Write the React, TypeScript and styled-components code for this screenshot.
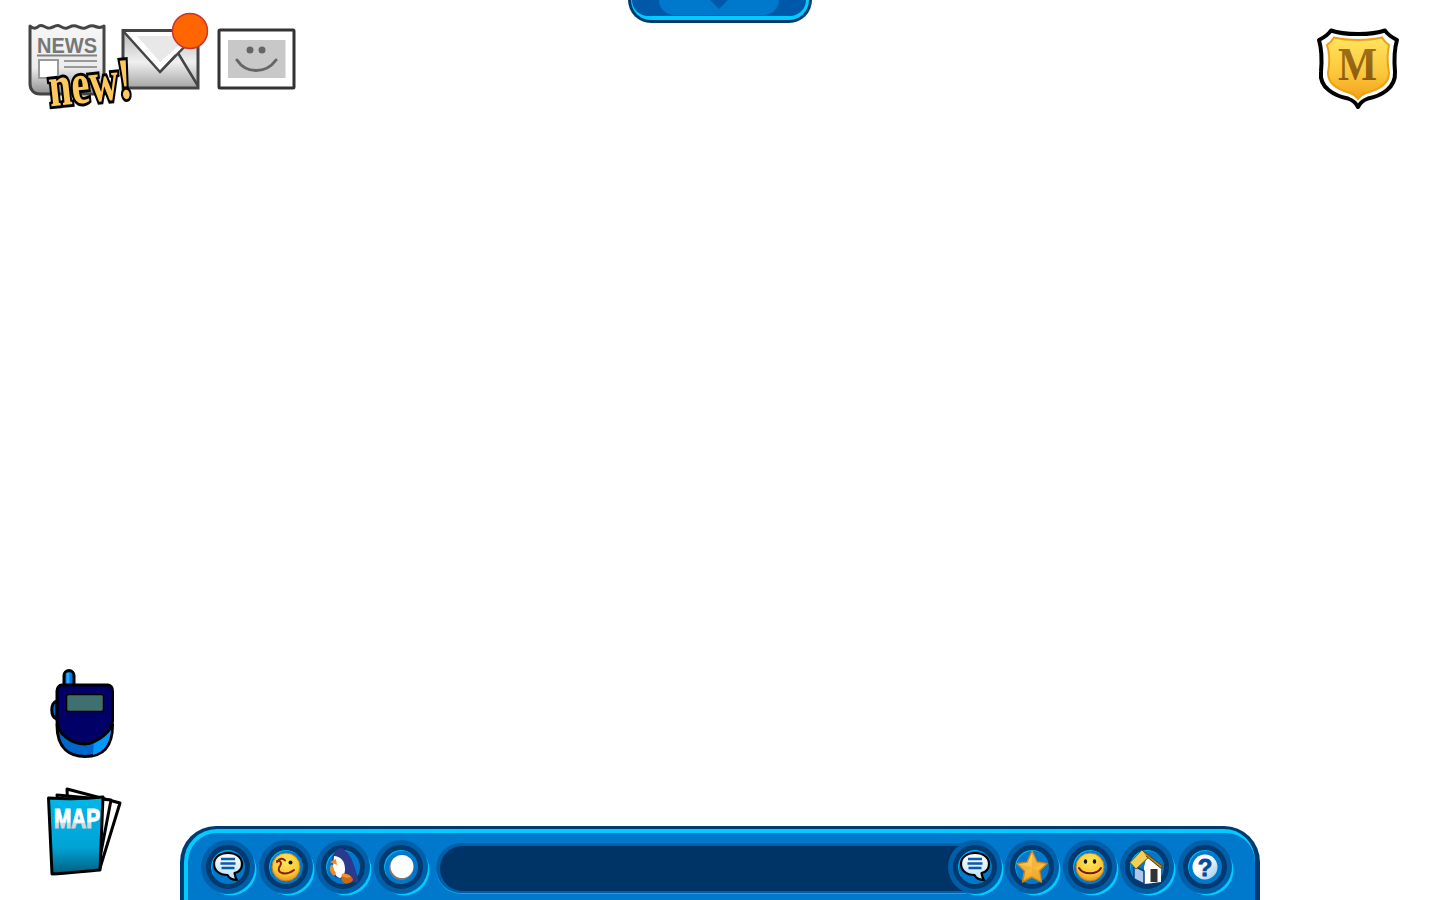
import React from "react";
import styled, { createGlobalStyle } from "styled-components";

const Global = createGlobalStyle`
  html, body { margin: 0; padding: 0; background: #fff; font-family: "Liberation Sans", Arial, sans-serif; }
`;

const Stage = styled.main`
  width: 1440px;
  height: 900px;
  overflow: hidden;
  background: #fff;
  display: flex;
  flex-direction: column;
  justify-content: space-between;
`;

const TopRow = styled.header`
  display: grid;
  grid-template-columns: 1fr auto 1fr;
  align-items: start;
`;

const TopLeft = styled.nav`
  display: flex;
  align-items: flex-start;
  padding-left: 26px;
`;

const TopRight = styled.div`
  display: flex;
  justify-content: flex-end;
  padding: 27px 40px 0 0;
`;

const IconSlot = styled.div<{ $top: number; $left?: number; $front?: boolean }>`
  position: relative;
  z-index: ${(p) => (p.$front ? 2 : 1)};
  display: flex;
  margin-top: ${(p) => p.$top}px;
  margin-left: ${(p) => p.$left ?? 0}px;
`;

const NewTag = styled.span`
  position: absolute;
  left: 14px;
  top: 33px;
  width: 100px;
  font: 700 58px/56px "Liberation Serif", serif;
  color: #ffc85c;
  -webkit-text-stroke: 6px #000;
  paint-order: stroke fill;
  transform: rotate(-6deg) scaleX(0.7);
  white-space: nowrap;
  display: flex;
  justify-content: center;
`;

const Tab = styled.div`
  width: 184px;
  height: 23px;
  box-sizing: border-box;
  background: #003a70;
  border-radius: 0 0 36px 36px;
  padding: 0 3px 3px;
`;

const TabRim = styled.div`
  height: 100%;
  box-sizing: border-box;
  background: #00ccff;
  border-radius: 0 0 33px 33px;
  padding: 0 3px 4px 1px;
`;

const TabFace = styled.div`
  height: 100%;
  background: #0059a8;
  border-radius: 0 0 28px 28px;
  display: flex;
  justify-content: center;
`;

const TabDome = styled.div`
  width: 120px;
  height: 15px;
  background: #0078cc;
  border-radius: 0 0 20px 20px;
  display: flex;
  justify-content: center;
`;

const TabChevron = styled.div`
  width: 0;
  height: 0;
  border-left: 9px solid transparent;
  border-right: 9px solid transparent;
  border-top: 9px solid #0059a8;
`;

const BottomRow = styled.footer`
  display: grid;
  grid-template-columns: 180px 1080px;
  align-items: end;
`;

const SideTools = styled.div`
  display: flex;
  flex-direction: column;
  align-items: flex-start;
  gap: 26px;
  padding: 0 0 22px 46px;
`;

const Toolbar = styled.div`
  height: 74px;
  box-sizing: border-box;
  background: #003a70;
  border-radius: 36px 36px 0 0;
  padding: 3px 5px 0 4px;
`;

const ToolbarRim = styled.div`
  height: 100%;
  box-sizing: border-box;
  background: #00ccff;
  border-radius: 33px 31px 0 0;
  padding: 4px 0 0 4px;
`;

const ToolbarFace = styled.div`
  height: 100%;
  box-sizing: border-box;
  background: #0078cc;
  border-radius: 29px 29px 0 0;
  display: flex;
  align-items: flex-start;
  gap: 7.6px;
  padding: 9px 25px 0 15px;
`;

const RoundButton = styled.button`
  flex: none;
  position: relative;
  z-index: 1;
  width: 50px;
  height: 50px;
  padding: 0;
  border: 0;
  border-radius: 50%;
  background: #005fa8;
  box-shadow: 0 0 0 2px #005fa8, 3px 3px 0 0.5px #00ccff;
  display: flex;
  align-items: center;
  justify-content: center;
`;

const ButtonRing = styled.span`
  width: 44px;
  height: 44px;
  flex: none;
  box-sizing: border-box;
  border: 5px solid #003a70;
  border-radius: 50%;
  background: #0078cc;
  box-shadow: inset 1px 1px 0 #00b4f0;
  display: flex;
  align-items: center;
  justify-content: center;
`;

const ButtonIcon = styled.svg`
  flex: none;
  width: 40px;
  height: 40px;
  overflow: visible;
`;

const ChatField = styled.div`
  flex: 1;
  height: 50px;
  box-sizing: border-box;
  margin: 1px -24px 0 3px;
  background: #005fa8;
  border-radius: 25px 0 0 25px;
  padding: 3px 0 2px 4px;
  box-shadow: 0 1px 0 #00aee8;
`;

const ChatInput = styled.div`
  height: 100%;
  background: #003366;
  border-radius: 24px 0 0 24px;
`;

const Ico = styled.svg`
  display: block;
  flex: none;
`;

const HiddenDefs = styled.svg`
  position: absolute;
  width: 0;
  height: 0;
`;

const Defs = () => (
  <HiddenDefs>
    <defs>
      <linearGradient id="paper" x1="0" y1="0" x2="0" y2="1">
        <stop offset="0" stopColor="#f6f6f6" />
        <stop offset="0.62" stopColor="#ececec" />
        <stop offset="1" stopColor="#8f8f8f" />
      </linearGradient>
      <linearGradient id="env" x1="0" y1="0" x2="0" y2="1">
        <stop offset="0" stopColor="#b8b8b8" />
        <stop offset="0.55" stopColor="#f0f0f0" />
        <stop offset="1" stopColor="#a4a4a4" />
      </linearGradient>
      <linearGradient id="gold" x1="0" y1="0" x2="0" y2="1">
        <stop offset="0" stopColor="#ffe45f" />
        <stop offset="0.6" stopColor="#fbc63a" />
        <stop offset="1" stopColor="#f2a11a" />
      </linearGradient>
      <linearGradient id="mText" x1="0" y1="0" x2="0" y2="1">
        <stop offset="0" stopColor="#a87418" />
        <stop offset="1" stopColor="#84560e" />
      </linearGradient>
      <linearGradient id="mapFill" x1="0" y1="0" x2="0" y2="1">
        <stop offset="0" stopColor="#00b7ea" />
        <stop offset="0.65" stopColor="#00a3d6" />
        <stop offset="1" stopColor="#00607f" />
      </linearGradient>
      <linearGradient id="mapText" x1="0" y1="0" x2="0" y2="1">
        <stop offset="0" stopColor="#ffffff" />
        <stop offset="0.6" stopColor="#ffffff" />
        <stop offset="0.65" stopColor="#d9d9d9" />
        <stop offset="1" stopColor="#cfcfcf" />
      </linearGradient>
      <linearGradient id="bubble" x1="0" y1="0" x2="0" y2="1">
        <stop offset="0" stopColor="#ffffff" />
        <stop offset="1" stopColor="#b9e0f5" />
      </linearGradient>
      <radialGradient id="face" cx="0.5" cy="0.3" r="0.75">
        <stop offset="0" stopColor="#ffe85a" />
        <stop offset="0.65" stopColor="#fbc834" />
        <stop offset="1" stopColor="#dd8a18" />
      </radialGradient>
      <linearGradient id="starFill" x1="0" y1="0" x2="0" y2="1">
        <stop offset="0" stopColor="#ffd966" />
        <stop offset="1" stopColor="#f3a52a" />
      </linearGradient>
      <linearGradient id="qFill" x1="0" y1="0" x2="1" y2="1">
        <stop offset="0.4" stopColor="#ffffff" />
        <stop offset="1" stopColor="#8ec6e8" />
      </linearGradient>
    </defs>
  </HiddenDefs>
);

const NewsIcon = () => (
  <Ico width="84" height="76" viewBox="26 22 84 76">
    <path
      d="M30 26 C33 29 36 29 39 26 C42 24 44 27 48 28 C52 29 54 25 58 25.500 C61 26 63 29 67 28 C70 27 72 25 76 26 C79 27 81 29 85 28 C88 27 90 25 94 26 C97 27 100 29 104 26 V94 H40 C34 94 30 90 30 84 Z"
      fill="url(#paper)"
      stroke="#444"
      strokeWidth="3"
      strokeLinejoin="round"
    />
    <text x="37" y="52.500" fontFamily="'Liberation Sans', sans-serif" fontWeight="700" fontSize="22.500" fill="#777" textLength="60" lengthAdjust="spacingAndGlyphs">NEWS</text>
    <path d="M37 55.500 H97" stroke="#808080" strokeWidth="2" />
    <rect x="39" y="60" width="19" height="18" fill="#fff" stroke="#999" strokeWidth="2" />
    <path d="M64 61 H97 M64 67 H97" stroke="#999" strokeWidth="2" />
  </Ico>
);

const MailIcon = () => (
  <Ico width="92" height="80" viewBox="120 11 92 80">
    <rect x="123" y="30.500" width="75" height="57.500" fill="url(#env)" stroke="#444" strokeWidth="3" />
    <path d="M124 32 H197 V33 L160 72 L124 32 Z" fill="#fff" />
    <path d="M137 36 H190 L160 62 Z" fill="#e8e8e8" />
    <path d="M124 32 L160 72 L176 55 M178 53 L198 86" fill="none" stroke="#444" strokeWidth="2.500" />
    <path d="M160 72 L190 41" fill="none" stroke="#444" strokeWidth="2.500" />
    <circle cx="190" cy="31" r="17.500" fill="#ff6600" stroke="#cc3333" strokeWidth="1.500" />
  </Ico>
);

const FrameIcon = () => (
  <Ico width="81" height="64" viewBox="216 27 81 64">
    <rect x="219" y="30" width="75" height="58" fill="#fff" stroke="#333" strokeWidth="3" rx="1" />
    <rect x="228" y="40" width="57.500" height="38" fill="#c8c8c8" />
    <circle cx="250" cy="50" r="3.500" fill="#666" />
    <circle cx="262" cy="50" r="3.500" fill="#666" />
    <path d="M237 60 C246 74 266 74 276 60" fill="none" stroke="#666" strokeWidth="3" strokeLinecap="round" />
  </Ico>
);

const MemberBadge = () => (
  <Ico width="85" height="84" viewBox="1315 27 85 84">
    <path
      d="M1358 34 C1350 34 1338 33 1331 30.500 C1328 35 1323 38 1319 40 C1322 50 1322 60 1321 72 C1319 88 1335 96 1348 98.500 C1352 100 1356 103 1358 107 C1360 103 1364 100 1368 98.500 C1381 96 1396 88 1395 72 C1394 60 1394 50 1397 40 C1393 38 1388 35 1385 30.500 C1378 33 1366 34 1358 34 Z"
      fill="#fff"
      stroke="#000"
      strokeWidth="4"
      strokeLinejoin="round"
    />
    <path
      d="M1358 40 C1350 40 1340 39 1334 37.500 C1332 41 1330 43 1327 45 C1330 54 1330 62 1328 73 C1328 84 1339 90 1350 93 C1353 94 1356 96 1358 99 C1360 96 1363 94 1366 93 C1378 90 1389 84 1389 73 C1387 62 1387 54 1389 45 C1386 43 1384 41 1382 37.500 C1376 39 1366 40 1358 40 Z"
      fill="url(#gold)"
      stroke="#efa010"
      strokeWidth="2"
    />
    <text x="1338" y="80" fontFamily="'Liberation Serif', serif" fontWeight="700" fontSize="46" fill="url(#mText)" textLength="39" lengthAdjust="spacingAndGlyphs">M</text>
  </Ico>
);

const PhoneIcon = () => (
  <Ico width="68" height="92" viewBox="46 669 68 92">
    <rect x="64" y="671.500" width="10" height="20" rx="5" fill="#0077dd" stroke="#000" strokeWidth="3" />
    <path d="M68 674 V686" stroke="#33aaff" strokeWidth="3" />
    <path d="M57 702 C50 703 50 718 57 720 Z" fill="#0066cc" stroke="#000" strokeWidth="3" />
    <path d="M57 726 C57 750 70 757.500 85 757.500 C100 757.500 112.500 750 112.500 726 Z" fill="#0066cc" stroke="#000" strokeWidth="3" />
    <path d="M93 756 L94 742 L111 731 C110 744 104 753 93 756 Z" fill="#0099ff" />
    <path d="M62 686 H108 C111 686 112.500 689 112.500 692 V722 C112.500 732 97 744 85 745 C72 745 57 735 57 722 V692 C57 689 59 686 62 686 Z" fill="#000066" stroke="#000" strokeWidth="3" />
    <rect x="66.500" y="695.500" width="37" height="17" rx="2" fill="#3f6f6f" stroke="#000" strokeWidth="1.500" />
  </Ico>
);

const MapIcon = () => (
  <Ico width="76" height="92" viewBox="46 786 76 92">
    <path d="M67 789 L120 803 L100 868 L70 860 Z" fill="#fff" stroke="#000" strokeWidth="3" strokeLinejoin="round" />
    <path d="M57 795 L111 800 L98 868 L66 860 Z" fill="#fff" stroke="#000" strokeWidth="3" strokeLinejoin="round" />
    <path d="M48.500 798 C65 799 85 799 103 797 L100 870 C85 871 70 873 52 874 Z" fill="url(#mapFill)" stroke="#000" strokeWidth="3" strokeLinejoin="round" />
    <text x="54" y="828" fontFamily="'Liberation Sans', sans-serif" fontWeight="700" fontSize="27" fill="url(#mapText)" stroke="url(#mapText)" strokeWidth="1.200" textLength="46" lengthAdjust="spacingAndGlyphs">MAP</text>
  </Ico>
);

const ChatIcon = () => (
  <ButtonIcon viewBox="0 0 40 40">
    <path d="M20 6 C29 6 34 11 34 17 C34 22 31 25 26.500 26 C27 29 27.500 31 29 33 C25 33 21 31 19.500 28 C11 28 6 23 6 17 C6 11 11 6 20 6 Z" fill="url(#bubble)" stroke="#000" strokeWidth="2.200" strokeLinejoin="round" />
    <path d="M13 12 H27 M12.500 16.500 H27.500 M13.500 21 H26.500" stroke="#0b5aa5" strokeWidth="2.400" />
  </ButtonIcon>
);

const WinkIcon = () => (
  <ButtonIcon viewBox="0 0 40 40">
    <circle cx="20" cy="20" r="14" fill="url(#face)" stroke="#c47f18" strokeWidth="1" />
    <circle cx="24.500" cy="15.500" r="2" fill="#111" />
    <path d="M11 15 C13 11 17 11 19 13.500 M11 14 C15 13 16 17 14 19 C12 21 12 25 16 26 C19 27 24 26 28 23" fill="none" stroke="#8c1f10" strokeWidth="2" strokeLinecap="round" />
  </ButtonIcon>
);

const PenguinIcon = () => (
  <ButtonIcon viewBox="0 0 40 40">
    <path d="M18 1 C13 2 10 6 9 11 L12 30 L26 34 L36 36 C34 28 32 20 29 13 C26 7 22 2 18 1 Z" fill="#2b3a8c" />
    <path d="M11 9 C17 9 22 14 22 22 C22 27 20 30 17 31 C13 30 11 26 10 20 Z" fill="#fff" />
    <path d="M7 15 L13 12 L14 18 Z" fill="#f58a1f" />
    <path d="M8 18 C6 22 7 26 11 29 L13 26 C11 24 10 21 10 18 Z" fill="#f58a1f" />
    <path d="M19 27 C24 26 30 30 30 33 C29 36 24 37 21 36 C18 34 18 30 19 27 Z" fill="#c96a16" />
    <path d="M19 27 C23 26 27 28 28 30 C25 31 21 31 19 29 Z" fill="#f0922a" />
  </ButtonIcon>
);

const SnowIcon = () => (
  <ButtonIcon viewBox="0 0 40 40">
    <circle cx="20" cy="21" r="12" fill="#777" />
    <circle cx="21" cy="19.500" r="11.500" fill="#fff" />
  </ButtonIcon>
);

const StarIcon = () => (
  <ButtonIcon viewBox="0 0 40 40">
    <path d="M20 4 L25 15 L35 16.500 L27.500 24 L29.500 35 L20 30 L10.500 35 L12.500 24 L5 16.500 L15 15 Z" fill="url(#starFill)" stroke="#c9811a" strokeWidth="1.500" strokeLinejoin="round" />
    <path d="M20 4 L20 21 L35 16.500 L25 15 Z M20 21 L27.500 24 L29.500 35 L20 30 Z M20 21 L12.500 24 L5 16.500 Z" fill="#f0a62a" opacity="0.5" />
  </ButtonIcon>
);

const SmileIcon = () => (
  <ButtonIcon viewBox="0 0 40 40">
    <circle cx="20" cy="20" r="14" fill="url(#face)" stroke="#c47f18" strokeWidth="1" />
    <ellipse cx="15.500" cy="14.500" rx="1.700" ry="2.300" fill="#111" />
    <ellipse cx="24.500" cy="14.500" rx="1.700" ry="2.300" fill="#111" />
    <path d="M9 21 C13 28 27 28 31 21" fill="none" stroke="#7a1410" strokeWidth="2" strokeLinecap="round" />
  </ButtonIcon>
);

const HouseIcon = () => (
  <ButtonIcon viewBox="0 0 40 40">
    <path d="M20 9 L34 21 V35 L17 37 V20 Z" fill="#fff" />
    <path d="M7 19 L17 24 V37 L7 32 Z" fill="#a8c8f0" stroke="#0b3a78" strokeWidth="1.500" strokeLinejoin="round" />
    <path d="M3 15.500 L15 3 L23 9 L9 22 Z" fill="#f2cf55" stroke="#7a5a12" strokeWidth="1" strokeLinejoin="round" />
    <path d="M15 3 L36 19.500 L33.500 21 L19 9" fill="#b38a20" stroke="#5a3f0c" strokeWidth="1" strokeLinejoin="round" />
    <rect x="23.500" y="22" width="7" height="13" fill="#333" />
  </ButtonIcon>
);

const HelpIcon = () => (
  <ButtonIcon viewBox="0 0 40 40">
    <circle cx="20" cy="20" r="12.500" fill="url(#qFill)" />
    <text x="20" y="28.500" textAnchor="middle" fontFamily="'Liberation Sans', sans-serif" fontWeight="700" fontSize="24" fill="#0b4a99" stroke="#0b4a99" strokeWidth="0.800">?</text>
  </ButtonIcon>
);

const ToolButton: React.FC<{ children: React.ReactNode; label: string }> = ({ children, label }) => (
  <RoundButton aria-label={label}>
    <ButtonRing>{children}</ButtonRing>
  </RoundButton>
);

export default function App() {
  return (
    <Stage>
      <Global />
      <Defs />
      <TopRow>
        <TopLeft>
          <IconSlot $top={22} $front>
            <NewsIcon />
            <NewTag>new!</NewTag>
          </IconSlot>
          <IconSlot $top={11} $left={10}>
            <MailIcon />
          </IconSlot>
          <IconSlot $top={27} $left={4}>
            <FrameIcon />
          </IconSlot>
        </TopLeft>
        <Tab>
          <TabRim>
            <TabFace>
              <TabDome>
                <TabChevron />
              </TabDome>
            </TabFace>
          </TabRim>
        </Tab>
        <TopRight>
          <MemberBadge />
        </TopRight>
      </TopRow>
      <BottomRow>
        <SideTools>
          <PhoneIcon />
          <MapIcon />
        </SideTools>
        <Toolbar>
          <ToolbarRim>
            <ToolbarFace>
              <ToolButton label="Chat"><ChatIcon /></ToolButton>
              <ToolButton label="Emotes"><WinkIcon /></ToolButton>
              <ToolButton label="Actions"><PenguinIcon /></ToolButton>
              <ToolButton label="Snowball"><SnowIcon /></ToolButton>
              <ChatField>
                <ChatInput />
              </ChatField>
              <ToolButton label="Send"><ChatIcon /></ToolButton>
              <ToolButton label="Favourites"><StarIcon /></ToolButton>
              <ToolButton label="Friends"><SmileIcon /></ToolButton>
              <ToolButton label="Home"><HouseIcon /></ToolButton>
              <ToolButton label="Help"><HelpIcon /></ToolButton>
            </ToolbarFace>
          </ToolbarRim>
        </Toolbar>
      </BottomRow>
    </Stage>
  );
}
